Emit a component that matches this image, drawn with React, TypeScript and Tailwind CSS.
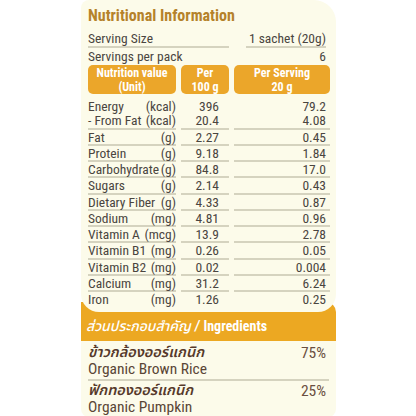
import React from "react";

type Item = { label: string; unit: string; per100: string; perServing: string };

const groups: Item[][] = [
  [
    { label: "Energy", unit: "(kcal)", per100: "396", perServing: "79.2" },
    { label: "- From Fat", unit: "(kcal)", per100: "20.4", perServing: "4.08" },
  ],
  [{ label: "Fat", unit: "(g)", per100: "2.27", perServing: "0.45" }],
  [{ label: "Protein", unit: "(g)", per100: "9.18", perServing: "1.84" }],
  [{ label: "Carbohydrate", unit: "(g)", per100: "84.8", perServing: "17.0" }],
  [{ label: "Sugars", unit: "(g)", per100: "2.14", perServing: "0.43" }],
  [{ label: "Dietary Fiber", unit: "(g)", per100: "4.33", perServing: "0.87" }],
  [{ label: "Sodium", unit: "(mg)", per100: "4.81", perServing: "0.96" }],
  [{ label: "Vitamin A", unit: "(mcg)", per100: "13.9", perServing: "2.78" }],
  [{ label: "Vitamin B1", unit: "(mg)", per100: "0.26", perServing: "0.05" }],
  [{ label: "Vitamin B2", unit: "(mg)", per100: "0.02", perServing: "0.004" }],
  [{ label: "Calcium", unit: "(mg)", per100: "31.2", perServing: "6.24" }],
  [{ label: "Iron", unit: "(mg)", per100: "1.26", perServing: "0.25" }],
];

const ingredients = [
  { th: "ข้าวกล้องออร์แกนิก", en: "Organic Brown Rice", pct: "75%" },
  { th: "ฟักทองออร์แกนิก", en: "Organic Pumpkin", pct: "25%" },
];

function Group({ items, last }: { items: Item[]; last: boolean }) {
  const line = last ? "" : "border-b-2 border-[#d5d3bf]";
  return (
    <div className="grid grid-cols-[88px_48px_96px] gap-x-[5px]">
      <div className={line}>
        {items.map((it) => (
          <div key={it.label} className="flex justify-between leading-[14.25px]">
            <span>{it.label}</span>
            <span>{it.unit}</span>
          </div>
        ))}
      </div>
      <div className={`text-right pr-[10px] ${line}`}>
        {items.map((it) => (
          <div key={it.label} className="leading-[14.25px]">{it.per100}</div>
        ))}
      </div>
      <div className={`text-right pr-[4px] ${line}`}>
        {items.map((it) => (
          <div key={it.label} className="leading-[14.25px]">{it.perServing}</div>
        ))}
      </div>
    </div>
  );
}

export default function App() {
  return (
    <div className="w-[416px] h-[416px] bg-white overflow-hidden font-['Liberation_Sans_Narrow','Roboto_Condensed','Liberation_Sans',sans-serif] text-[13.5px] text-[#4a453f]">
      <div className="w-[255px] ml-[81px]">
        {/* Nutrition table */}
        <div className="relative z-10 bg-[#fcfbea] rounded-tl-[8px] rounded-tr-[22px] rounded-b-[18px] px-[7px] pt-[5px] pb-[6px]">
          <h1 className="text-[16px] leading-[22px] font-bold text-[#b5822a]">Nutritional Information</h1>

          <div className="mt-[3px] grid grid-cols-[141px_96px] gap-x-[5px] leading-[16px]">
            <div className="border-b-2 border-[#d5d3bf]">Serving Size</div>
            <div className="ml-[12px] mr-[4px] text-right border-b-2 border-[#d5d3bf]">1 sachet (20g)</div>
            <div>Servings per pack</div>
            <div className="text-right pr-[4px]">6</div>
          </div>

          <div className="mt-[1px] grid grid-cols-[88px_48px_96px] gap-x-[5px] h-[29px] text-white font-bold text-[12px] leading-[14px] text-center">
            <div className="bg-[#eba62a] rounded-[5px] flex flex-col justify-center">
              <span>Nutrition value</span>
              <span>(Unit)</span>
            </div>
            <div className="bg-[#eba62a] rounded-[5px] flex flex-col justify-center">
              <span>Per</span>
              <span>100 g</span>
            </div>
            <div className="bg-[#eba62a] rounded-[5px] flex flex-col justify-center">
              <span>Per Serving</span>
              <span>20 g</span>
            </div>
          </div>

          <div className="mt-[5px]">
            {groups.map((g, i) => (
              <Group key={i} items={g} last={i === groups.length - 1} />
            ))}
          </div>
        </div>

        {/* Ingredients header */}
        <div className="-mt-[10px] pt-[10px] bg-[#eca822] rounded-tr-[10px] h-[39px] flex items-center px-[5px] text-white text-[14px] font-bold">
          <span className="italic font-['Noto_Sans_Thai','Loma','Liberation_Sans',sans-serif] font-medium">ส่วนประกอบสำคัญ</span>
          <span className="ml-[4px] italic">/</span>
          <span className="ml-[4px]">Ingredients</span>
        </div>

        {/* Ingredients list */}
        <div className="bg-[#fcfbea] rounded-b-[8px] px-[7px] pt-[4px] pb-[2px] text-[15.5px]">
          {ingredients.map((ing, i) => (
            <div
              key={ing.en}
              className={`flex justify-between ${i === 0 ? "border-b-2 border-[#d5d3bf] pb-[2px]" : "pt-[2px]"}`}
            >
              <div className="text-[#5a4636]">
                <div className="leading-[16px] text-[14.5px] font-semibold italic text-[#56392a] font-['Noto_Sans_Thai','Loma','Liberation_Sans',sans-serif]">{ing.th}</div>
                <div className="leading-[16px]">{ing.en}</div>
              </div>
              <div className="pr-[3px] leading-[16px] text-[#6a4f40]">{ing.pct}</div>
            </div>
          ))}
        </div>
      </div>
    </div>
  );
}
